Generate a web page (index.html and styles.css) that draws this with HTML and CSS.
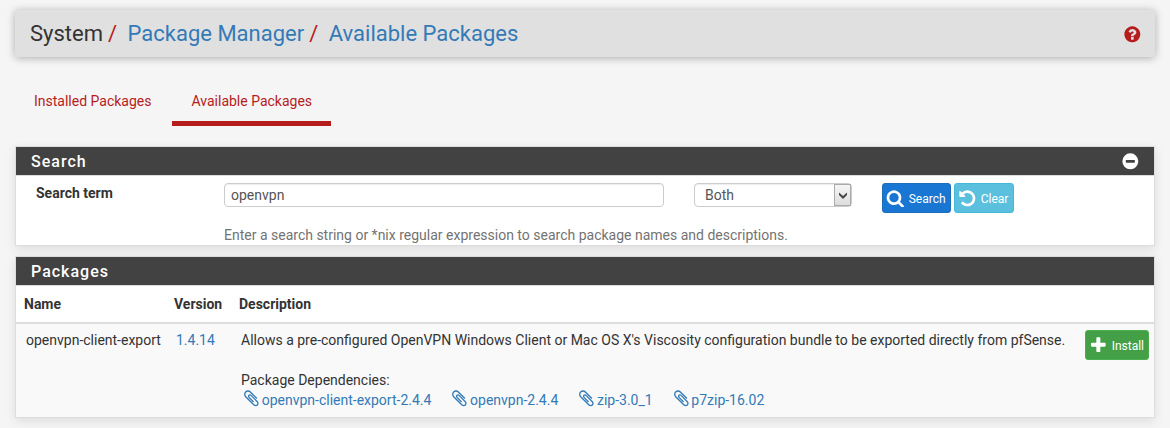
FILE: index.html
```
<!DOCTYPE html>
<html lang="en">
<head>
<meta charset="utf-8">
<title>System: Package Manager: Available Packages</title>
<link rel="stylesheet" href="styles.css">
</head>
<body>
<svg class="defs" aria-hidden="true">
  <symbol id="clip" viewBox="0 0 1792 1792"><path d="M1596 1385q0 117-79 196t-196 79q-135 0-235-100l-777-776q-113-115-113-271 0-159 110-270t269-111q158 0 273 113l605 606q10 10 10 22 0 16-30.5 46.5t-46.5 30.5q-13 0-23-10l-606-607q-79-77-181-77-106 0-179 75t-73 181q0 105 76 181l776 777q63 63 145 63 64 0 106-42t42-106q0-82-63-145l-581-581q-26-24-60-24-29 0-48 19t-19 48q0 32 25 59l410 410q10 10 10 22 0 16-31 47t-47 31q-12 0-22-10l-410-410q-63-61-63-149 0-82 57-139t139-57q88 0 149 63l581 581q100 98 100 235z"/></symbol>
</svg>
<header class="header">
  <div class="crumbs"><span>System</span><i>/</i><a>Package Manager</a><i>/</i><a>Available Packages</a></div>
  <svg class="icon help" viewBox="0 0 1792 1792"><path d="M1024 1376v-192q0-14-9-23t-23-9h-192q-14 0-23 9t-9 23v192q0 14 9 23t23 9h192q14 0 23-9t9-23zm256-672q0-88-55.5-163t-138.5-116-170-41q-243 0-371 213-15 24 8 42l132 100q7 6 19 6 16 0 25-12 53-68 86-92 34-24 86-24 48 0 85.5 26t37.5 59q0 38-20 61t-68 45q-63 28-115.5 86.5t-52.5 125.5v36q0 14 9 23t23 9h192q14 0 23-9t9-23q0-19 21.5-49.5t54.5-49.5q32-18 49-28.5t46-35 44.5-48 28-60.5 12.5-81zm384 192q0 209-103 385.5t-279.5 279.5-385.5 103-385.5-103-279.5-279.5-103-385.5 103-385.5 279.5-279.5 385.5-103 385.5 103 279.5 279.5 103 385.5z"/></svg>
</header>
<nav class="tabs"><a class="tab">Installed Packages</a><a class="tab active">Available Packages</a></nav>

<section class="panel search">
  <div class="heading"><h2>Search</h2>
    <svg class="icon" viewBox="0 0 1792 1792"><path fill-rule="evenodd" d="M128 896a768 768 0 1 1 1536 0a768 768 0 1 1-1536 0zM512 768q-52 0-52 60v136q0 60 52 60h768q52 0 52-60v-136q0-60-52-60z"/></svg>
  </div>
  <div class="form">
    <label class="label" for="term">Search term</label>
    <div class="term"><input id="term" class="control" type="text" value="openvpn"><p class="hint">Enter a search string or *nix regular expression to search package names and descriptions.</p></div>
    <div class="control select"><span>Both</span><b class="arrow"><svg width="8" height="7" viewBox="0 0 8 7"><path d="M0 0.5L4 4L8 0.5V3L4 7L0 3z"/></svg></b></div>
    <div class="actions">
      <button class="btn blue"><svg class="icon" viewBox="0 0 1792 1792"><path d="M1216 832q0-185-131.5-316.5t-316.5-131.5-316.5 131.5-131.5 316.5 131.5 316.5 316.5 131.5 316.5-131.5 131.5-316.5zm512 832q0 52-38 90t-90 38q-54 0-90-38l-343-342q-179 124-399 124-143 0-273.5-55.5t-225-150-150-225-55.5-273.5 55.5-273.5 150-225 225-150 273.5-55.5 273.5 55.5 225 150 150 225 55.5 273.5q0 220-124 399l343 343q37 37 37 90z"/></svg><span>Search</span></button>
      <button class="btn cyan"><svg class="icon" viewBox="0 0 1792 1792"><path d="M1664 896q0 156-61 298t-164 245-245 164-298 61q-172 0-327-72.5t-264-204.5q-7-10-6.5-22.5t8.5-20.5l137-138q10-9 25-9 16 2 23 12 73 95 179 147t225 52q104 0 198.5-40.5t163.5-109.5 109.5-163.5 40.5-198.5-40.5-198.5-109.5-163.5-163.5-109.5-198.5-40.5q-98 0-188 35.5t-160 101.5l137 138q31 30 14 69-17 40-59 40h-448q-26 0-45-19t-19-45v-448q0-42 40-59 39-17 69 14l130 129q107-101 244.5-156.5t284.5-55.5q156 0 298 61t245 164 164 245 61 298z"/></svg><span>Clear</span></button>
    </div>
  </div>
</section>

<section class="panel packages">
  <div class="heading"><h2>Packages</h2></div>
  <div class="row head"><span>Name</span><span>Version</span><span>Description</span></div>
  <div class="row item">
    <span>openvpn-client-export</span><a>1.4.14</a>
    <div><p>Allows a pre-configured OpenVPN Windows Client or Mac OS X's Viscosity configuration bundle to be exported directly from pfSense.</p>
      <p class="deps-title">Package Dependencies:</p>
      <div class="deps"><a><svg class="icon"><use href="#clip"/></svg>openvpn-client-export-2.4.4</a><a><svg class="icon"><use href="#clip"/></svg>openvpn-2.4.4</a><a><svg class="icon"><use href="#clip"/></svg>zip-3.0_1</a><a><svg class="icon"><use href="#clip"/></svg>p7zip-16.02</a></div>
    </div>
    <button class="btn green"><svg class="icon" viewBox="0 0 1792 1792"><path d="M1600 736v192q0 40-28 68t-68 28h-416v416q0 40-28 68t-68 28h-192q-40 0-68-28t-28-68v-416h-416q-40 0-68-28t-28-68v-192q0-40 28-68t68-28h416v-416q0-40 28-68t68-28h192q40 0 68 28t28 68v416h416q40 0 68 28t28 68z"/></svg><span>Install</span></button>
  </div>
</section>
</body>
</html>
```
FILE: styles.css
```
* { box-sizing: border-box; }
body { margin: 0; padding: 10px 15px 0; height: 428px; overflow: hidden; background: #f5f5f5; color: #333; font: 14px/20px Roboto, sans-serif; }
h2, p { margin: 0; }
a { color: #337ab7; }
.defs { display: none; }
.icon { width: 18.67px; height: 18.67px; fill: currentColor; flex: none; }
.header { height: 47px; border-radius: 3px; background: #e0e0e0; box-shadow: 0 1px 9px rgba(0,0,0,.3); display: flex; justify-content: space-between; padding: 0 13px 0 15px; align-items: center; }
.crumbs { display: flex; font-size: 22px; line-height: 46px; white-space: nowrap; }
.crumbs i { font-style: normal; color: #b71c1c; margin: 0 10.5px 0 5px; }
.help { color: #b71c1c; position: relative; top: 1px; }
.tabs { display: flex; height: 69px; margin-bottom: 20px; padding-top: 24px; }
.tab { height: 45px; padding: 10px 19px 0; color: #b71c1c; line-height: 20px; }
.tab.active { border-bottom: 5px solid #b71c1c; margin-left: 2px; }
.panel { border: 1px solid #ddd; background: #fff; box-shadow: 0 3px 10px rgba(0,0,0,.1); }
.search { height: 100px; margin-bottom: 10px; }
.heading { height: 29px; background: #424242; border-bottom: 1px solid #ddd; color: #fff; display: flex; justify-content: space-between; align-items: center; padding: 1px 14px 0 15px; }
h2 { font-size: 16px; line-height: 27px; font-weight: 500; letter-spacing: 1px; }
.form { display: flex; padding: 7px 20px 0; }
.label { width: 188px; font-weight: 700; }
.term { width: 440px; margin-right: 30px; }
.control { display: block; width: 100%; height: 24px; border: 1px solid #ccc; border-radius: 4px; background: #fff; color: #555; font: 14px/22px Roboto, sans-serif; padding: 0 6px; box-shadow: inset 0 1px 1px rgba(0,0,0,.075); }
.hint { color: #737373; margin-top: 18px; white-space: nowrap; }
.select { width: 158px; display: flex; justify-content: space-between; padding: 0 0 0 10px; margin-right: 30px; }
.arrow { width: 17px; height: 22px; border: 1px solid #aaa; background: linear-gradient(#f5f5f5, #ddd); display: grid; place-items: center; }
.arrow svg { fill: #444; }
.actions { display: flex; gap: 3px; }
.btn { height: 30px; border-radius: 3px; border: 1px solid; padding: 0 3px; color: #fff; font: 12px/18px Roboto, sans-serif; display: flex; align-items: center; gap: 4px; white-space: nowrap; }
.btn span { position: relative; top: 1px; }
.blue { width: 69px; background: #1976d2; border-color: #1f6cb8; }
.cyan { width: 60px; background: #5bc0de; border-color: #46b8da; }
.green { width: 64px; background: #43a047; border-color: #4cae4c; }
.row { display: grid; grid-template-columns: 150px 65px 844px 64px; }
.head { height: 38px; padding: 8px 0 0 8px; border-bottom: 2px solid #ddd; font-weight: 700; }
.item { height: 93px; padding: 6px 0 0 10px; background: #f9f9f9; }
.item p { white-space: nowrap; }
.deps-title { margin-top: 20px; }
.deps { display: flex; gap: 18px; white-space: nowrap; }
.deps a { display: flex; align-items: center; }
.deps .icon { margin: -4px 1px 0; }
.packages { height: 162px; }
```
